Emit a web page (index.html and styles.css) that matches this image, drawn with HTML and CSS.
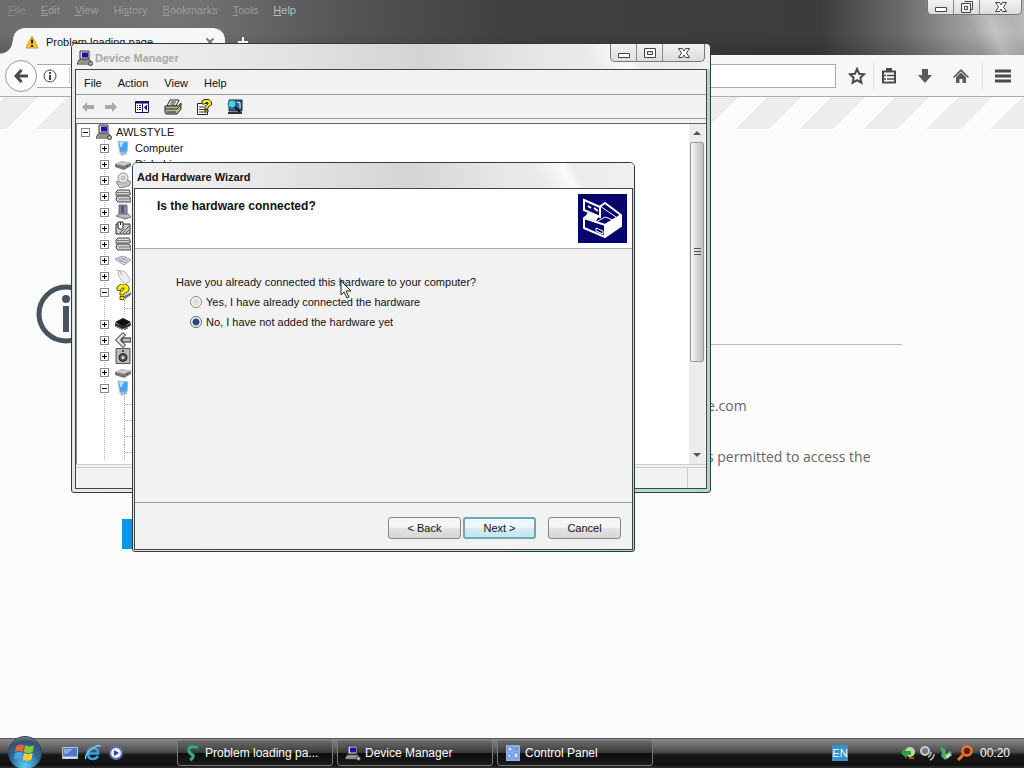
FILE: index.html
```html
<!DOCTYPE html>
<html lang="en">
<head>
  <meta charset="UTF-8">
  <title>Add Hardware Wizard</title>
  <link rel="stylesheet" href="styles.css">
</head>

<body>
  <!-- Shared icons -->
  <svg class="sprite" aria-hidden="true">
    <symbol id="i-pc" viewBox="0 0 16 16">
      <path d="M3 1h9v8H3z" fill="#d8d8d0" stroke="#333"/>
      <path d="M5 2.500h6v5H5z" fill="#1512b8"/>
      <path d="M2 10h11l2 4H0z" fill="#e4e4dc" stroke="#333"/>
      <path d="M2 12h10" stroke="#444"/>
      <circle cx="13.500" cy="13.500" r="2" fill="#bbb" stroke="#333"/>
    </symbol>
    <symbol id="i-monitor" viewBox="0 0 16 16">
      <path d="M3 1l10 1-1 10-7 1z" fill="#42a5ee" stroke="#a9bcd0"/>
      <path d="M4 2h5l-3 6z" fill="#b7e8ff"/>
      <path d="M5 12l7-1v3l-6 2z" fill="#aab4c8"/>
    </symbol>
    <symbol id="i-disk" viewBox="0 0 16 16">
      <path d="M0 8l7-3 9 2v3l-7 4-9-3z" fill="#777"/>
      <path d="M0 8l7-3 9 2-7 3z" fill="#c6c6c2"/>
      <circle cx="12" cy="10" r="1" fill="#555"/>
    </symbol>
    <symbol id="i-cd" viewBox="0 0 16 16">
      <path d="M1 10l10-3 5 3-2 4-9 2z" fill="#c4c4cc" stroke="#888"/>
      <circle cx="8" cy="6" r="5" fill="#e4e4ec" stroke="#999"/>
      <circle cx="8" cy="6" r="1.500" fill="#fff" stroke="#999"/>
    </symbol>
    <symbol id="i-ctrl" viewBox="0 0 16 16">
      <path d="M3 2h11l1 2v3H1V4z" fill="#ddd" stroke="#444"/>
      <path d="M2 8h11l3 2v4H3L1 12z" fill="#ccc" stroke="#444"/>
      <path d="M2 4.500h12M4 11h11" stroke="#777"/>
    </symbol>
    <symbol id="i-display" viewBox="0 0 16 16">
      <path d="M4 1h8v9H4z" fill="#8389a4" stroke="#666"/>
      <path d="M6 2h3v7H6z" fill="#4b5390"/>
      <path d="M1 12l4-2h8l3 3-6 2z" fill="#b8b8c4" stroke="#777"/>
    </symbol>
    <symbol id="i-mouse" viewBox="0 0 16 16">
      <path d="M1 4h14v10H1z" fill="#c9c9c9" stroke="#333"/>
      <path d="M8 13l6-7M11 13l3-3M5 13l4-4" stroke="#555"/>
      <path d="M3 2h5v6q-2 3-5 0z" fill="#fff" stroke="#222"/>
      <path d="M5.500 2v3" stroke="#222"/>
    </symbol>
    <symbol id="i-keyboard" viewBox="0 0 16 16">
      <path d="M0 7l8-3 8 4-7 5z" fill="#dcdce6" stroke="#9a9aaa"/>
      <path d="M3 7l8 4M6 6l7 3M5 10l6-5" stroke="#9a9aaa"/>
    </symbol>
    <symbol id="i-mouse2" viewBox="0 0 16 16">
      <path d="M3 4q3-3 7 0l5 7q0 5-6 4L4 9z" fill="#eceef0" stroke="#b4bac0"/>
      <path d="M1 2l4 1 2 4" fill="none" stroke="#aaa"/>
    </symbol>
    <symbol id="i-unknown" viewBox="0 0 16 16">
      <path d="M9 12l7-4v3l-6 4z" fill="#777"/>
      <path d="M2 6V3l4-3h5l3 3v4L9 10v1H5V8l4-3V4H7L5 7z" fill="#f5ea14" stroke="#5c5600"/>
      <path d="M5 12.500h4v3H5z" fill="#f5ea14" stroke="#5c5600"/>
    </symbol>
    <symbol id="i-chip" viewBox="0 0 16 16">
      <path d="M0 6l8-4 8 4-8 5z" fill="#111"/>
      <path d="M1 8v3M3 9v3M5 10v3M7 11v3M10 11v3M12 10v3M14 8v3" stroke="#111"/>
      <path d="M0 8l8 4 8-4" fill="none" stroke="#222" stroke-width="2"/>
    </symbol>
    <symbol id="i-port" viewBox="0 0 16 16">
      <path d="M8 0.500L.5 8 8 15.500l2.500-2.500-5-5 5-5z" fill="#ddd" stroke="#222"/>
      <path d="M7 6h9v4H7z" fill="#bbb" stroke="#222"/>
    </symbol>
    <symbol id="i-speaker" viewBox="0 0 16 16">
      <path d="M1 .500h14v15H1z" fill="#bbb" stroke="#555"/>
      <circle cx="8" cy="9.500" r="4" fill="#555" stroke="#222"/>
      <circle cx="8" cy="9.500" r="1.500" fill="#ddd"/>
      <circle cx="8" cy="3" r="1" fill="#222"/>
    </symbol>
    <symbol id="i-min" viewBox="0 0 14 12">
      <path d="M1.500 6.500h11v4h-11z" fill="#fff" stroke="#444"/>
    </symbol>
    <symbol id="i-max" viewBox="0 0 14 12">
      <path d="M1.500 1.500h11v9h-11z" fill="#fff" stroke="#444"/>
      <path d="M4.500 4.500h5v3h-5z" fill="#ddd" stroke="#444"/>
    </symbol>
    <symbol id="i-restore" viewBox="0 0 14 12">
      <path d="M4.500.500h8v8h-2M1.500 2.500h9v9h-9z" fill="#eee" stroke="#444"/>
      <path d="M4.500 5.500h3v3h-3z" fill="#fff" stroke="#444"/>
    </symbol>
    <symbol id="i-close" viewBox="0 0 14 12">
      <path d="M1.500 1.500h4L7 4l1.500-2.500h4L9.500 6l3 4.500h-4L7 8l-1.500 2.500h-4l3-4.500z" fill="#fff" stroke="#444"/>
    </symbol>
  </svg>

  <div class="desktop">
    <!-- Browser -->
    <main class="browser">
      <header class="browser-top">
        <nav class="browser-menu">
          <a href="#"><u>F</u>ile</a>
          <a href="#"><u>E</u>dit</a>
          <a href="#"><u>V</u>iew</a>
          <a href="#">Hi<u>s</u>tory</a>
          <a href="#"><u>B</u>ookmarks</a>
          <a href="#"><u>T</u>ools</a>
          <a href="#"><u>H</u>elp</a>
        </nav>
        <div class="tabs">
          <div class="tab">
            <svg width="14" height="14" viewBox="0 0 14 14"><path d="M7 1l6 12H1z" fill="#fdc22a" stroke="#d99a1c" stroke-linejoin="round"/><path d="M7 4.500v4M7 10v2" stroke="#222" stroke-width="2"/></svg>
            <span>Problem loading page</span>
            <button class="tab-close" aria-label="Close tab"><svg width="10" height="10" viewBox="0 0 10 10"><path d="M1.500 1.500l7 7M8.500 1.500l-7 7" stroke="#777" stroke-width="2"/></svg></button>
          </div>
          <button class="tab-new" aria-label="New tab"><svg width="12" height="12" viewBox="0 0 12 12"><path d="M6 1v10M1 6h10" stroke="#fff" stroke-width="2"/></svg></button>
        </div>
        <div class="caption caption-main">
          <button aria-label="Minimize"><svg width="14" height="12"><use href="#i-min"/></svg></button>
          <button aria-label="Restore"><svg width="14" height="12"><use href="#i-restore"/></svg></button>
          <button class="wide" aria-label="Close"><svg width="14" height="12"><use href="#i-close"/></svg></button>
        </div>
      </header>

      <div class="navbar">
        <button class="back" aria-label="Back"><svg width="16" height="16" viewBox="0 0 16 16"><path d="M8.500 2L3 8l5.500 6M3 8h12" fill="none" stroke="#4a4a4a" stroke-width="3"/></svg></button>
        <div class="url">
          <svg width="14" height="14" viewBox="0 0 14 14"><circle cx="7" cy="7" r="6" fill="none" stroke="#444"/><path d="M7 3v2M7 6v5" stroke="#444" stroke-width="2"/></svg>
          <input type="text" aria-label="Address">
        </div>
        <div class="tools">
          <button aria-label="Bookmark"><svg width="18" height="18" viewBox="0 0 18 18"><path d="M9 2l2.100 4.700 5 .500-3.700 3.500 1 5L9 13.200l-4.400 2.500 1-5L1.900 7.200l5-.500z" fill="none" stroke="#4a4a4a" stroke-width="2"/></svg></button>
          <button class="split" aria-label="Library"><svg width="18" height="18" viewBox="0 0 18 18"><path d="M3 4.500h12v11H3z" fill="none" stroke="#4a4a4a" stroke-width="2"/><path d="M6 1h6v4H6z" fill="#4a4a4a"/><path d="M3 8.500h12M3 12h12" stroke="#4a4a4a" stroke-width="1.500"/><path d="M6.500 6v9" stroke="#f6f6f6"/></svg></button>
          <button aria-label="Downloads"><svg width="18" height="18" viewBox="0 0 18 18"><path d="M6 2h6v6h4l-7 8-7-8h4z" fill="#5a5a58"/></svg></button>
          <button aria-label="Home"><svg width="18" height="18" viewBox="0 0 18 18"><path d="M9 2l8 8-1 1-7-6.500L2 11l-1-1z" fill="#5a5a58"/><path d="M4 10l5-4.500 5 4.500v6h-3.500v-4h-3v4H4z" fill="#5a5a58"/></svg></button>
          <button class="split" aria-label="Menu"><svg width="18" height="18" viewBox="0 0 18 18"><path d="M1 4h16M1 9h16M1 14h16" stroke="#4a4a46" stroke-width="3"/></svg></button>
        </div>
      </div>

      <div class="hatch"></div>
      <section class="error-page">
        <div class="error-head">
          <svg width="60" height="60" viewBox="0 0 60 60"><circle cx="30" cy="30" r="27" fill="none" stroke="#49535c" stroke-width="5"/><circle cx="30" cy="15" r="4" fill="#49535c"/><path d="M30 22v26" stroke="#49535c" stroke-width="6"/></svg>
        </div>
        <div class="error-text">
          <p>e.com</p>
          <p>s permitted to access the</p>
        </div>
        <button class="retry" aria-label="Try again"></button>
      </section>
    </main>

    <!-- Device Manager -->
    <section class="window devmgr">
      <div class="titlebar">
        <svg width="16" height="16"><use href="#i-pc"/></svg>
        <h2>Device Manager</h2>
        <div class="caption">
          <button aria-label="Minimize"><svg width="14" height="12"><use href="#i-min"/></svg></button>
          <button aria-label="Maximize"><svg width="14" height="12"><use href="#i-max"/></svg></button>
          <button class="wide" aria-label="Close"><svg width="14" height="12"><use href="#i-close"/></svg></button>
        </div>
      </div>
      <div class="client">
        <nav class="menubar">
          <a href="#">File</a>
          <a href="#">Action</a>
          <a href="#">View</a>
          <a href="#">Help</a>
        </nav>
        <div class="toolbar">
          <button aria-label="Back"><svg width="14" height="12" viewBox="0 0 14 12"><path d="M1 6l5-5v3h7v4H6v3z" fill="#a8a8a8"/></svg></button>
          <button aria-label="Forward"><svg width="14" height="12" viewBox="0 0 14 12"><path d="M13 6L8 1v3H1v4h7v3z" fill="#a8a8a8"/></svg></button>
          <div class="toolset">
            <button aria-label="Show tree"><svg width="16" height="16" viewBox="0 0 16 16"><path d="M1.500 2.500h13v11h-13z" fill="#fff" stroke="#10106c"/><path d="M1 3.500h14" stroke="#10106c" stroke-width="2"/><path d="M8.500 3v10" stroke="#10106c"/><path d="M3 6.500h1M5 6.500h2M3 8.500h1M5 8.500h2M3 10.500h1M5 10.500h2" stroke="#10106c"/><path d="M13 5.500v6L10 8.500z" fill="#10106c"/></svg></button>
            <button aria-label="Print"><svg width="18" height="16" viewBox="0 0 18 16"><path d="M6 1h9l-3 6H3z" fill="#fff" stroke="#222"/><path d="M7 3h5M6 5h5" stroke="#222"/><path d="M1 7h13l3-3v6l-4 5H2l-1-2z" fill="#b9b994" stroke="#222"/><path d="M1 10h12l4-4M3 13h9" fill="none" stroke="#222"/></svg></button>
            <button aria-label="Help topics"><svg width="16" height="16" viewBox="0 0 16 16"><path d="M1.500 4.500h10v11h-10z" fill="#fff" stroke="#222"/><path d="M3 8h5M3 10.500h7M3 13h7" stroke="#333"/><path d="M6 5V2l2-1.500h5L15.500 3v3L12 8v2H9V7l3-2V3.500h-2L9 5z" fill="#f5ea14" stroke="#333"/><path d="M9 11h3v2H9z" fill="#f5ea14" stroke="#333"/></svg></button>
            <button aria-label="Scan for hardware changes"><svg width="16" height="16" viewBox="0 0 16 16"><path d="M2 1h13v11H2z" fill="#2565a8" stroke="#222"/><path d="M1 14h14" stroke="#333" stroke-width="2"/><circle cx="5" cy="5" r="4" fill="#52cde0" stroke="#1b6d80"/><path d="M8 8l5 5" stroke="#111" stroke-width="2"/><path d="M10 3l3 1v5" fill="none" stroke="#fff"/></svg></button>
          </div>
        </div>
        <div class="pane">
          <div class="tree">
            <div class="row root"><button class="toggle open" aria-label="Collapse"></button><svg width="16" height="16"><use href="#i-pc"/></svg><span>AWLSTYLE</span></div>
            <ul class="branch">
              <li class="row"><button class="toggle" aria-label="Expand"></button><svg width="16" height="16"><use href="#i-monitor"/></svg><span>Computer</span></li>
              <li class="row"><button class="toggle" aria-label="Expand"></button><svg width="16" height="16"><use href="#i-disk"/></svg><span>Disk drives</span></li>
              <li class="row"><button class="toggle" aria-label="Expand"></button><svg width="16" height="16"><use href="#i-cd"/></svg></li>
              <li class="row"><button class="toggle" aria-label="Expand"></button><svg width="16" height="16"><use href="#i-ctrl"/></svg></li>
              <li class="row"><button class="toggle" aria-label="Expand"></button><svg width="16" height="16"><use href="#i-display"/></svg></li>
              <li class="row"><button class="toggle" aria-label="Expand"></button><svg width="16" height="16"><use href="#i-mouse"/></svg></li>
              <li class="row"><button class="toggle" aria-label="Expand"></button><svg width="16" height="16"><use href="#i-ctrl"/></svg></li>
              <li class="row"><button class="toggle" aria-label="Expand"></button><svg width="16" height="16"><use href="#i-keyboard"/></svg></li>
              <li class="row"><button class="toggle" aria-label="Expand"></button><svg width="16" height="16"><use href="#i-mouse2"/></svg></li>
              <li class="row"><button class="toggle open" aria-label="Collapse"></button><svg width="16" height="16"><use href="#i-unknown"/></svg></li>
              <li class="leaf"></li>
              <li class="row"><button class="toggle" aria-label="Expand"></button><svg width="16" height="16"><use href="#i-chip"/></svg></li>
              <li class="row"><button class="toggle" aria-label="Expand"></button><svg width="16" height="16"><use href="#i-port"/></svg></li>
              <li class="row"><button class="toggle" aria-label="Expand"></button><svg width="16" height="16"><use href="#i-speaker"/></svg></li>
              <li class="row"><button class="toggle" aria-label="Expand"></button><svg width="16" height="16"><use href="#i-disk"/></svg></li>
              <li class="row"><button class="toggle open" aria-label="Collapse"></button><svg width="16" height="16"><use href="#i-monitor"/></svg></li>
              <li class="leaf"></li>
              <li class="leaf"></li>
              <li class="leaf"></li>
              <li class="leaf"></li>
            </ul>
          </div>
          <div class="scrollbar">
            <button class="arrow" aria-label="Scroll up"><svg width="8" height="4" viewBox="0 0 8 4"><path d="M4 0l4 4H0z" fill="#555"/></svg></button>
            <div class="thumb"><i></i></div>
            <button class="arrow" aria-label="Scroll down"><svg width="8" height="4" viewBox="0 0 8 4"><path d="M4 4l4-4H0z" fill="#555"/></svg></button>
          </div>
        </div>
        <div class="statusbar"><span></span><span></span></div>
      </div>
    </section>

    <!-- Add Hardware Wizard -->
    <form class="window wizard">
      <div class="titlebar"><h2>Add Hardware Wizard</h2></div>
      <div class="client">
        <div class="wizard-head">
          <h3>Is the hardware connected?</h3>
          <svg width="49" height="49" viewBox="0 0 49 49">
            <path d="M0 0h49v49H0z" fill="#04046c"/>
            <path d="M6 24l21-15 16 12v11L27 43 6 34z" fill="#04046c" stroke="#fff" stroke-width="2" stroke-linejoin="round"/>
            <path d="M27 30l16-9v11L27 43z" fill="#fff"/>
            <path d="M6 24l21 7 16-10M27 31v12" fill="none" stroke="#fff" stroke-width="2"/>
            <path d="M22 12l16 11M18 28l9-5 8 3" fill="none" stroke="#fff"/>
            <path d="M6 6l16 7v10L6 16z" fill="#04046c" stroke="#fff" stroke-width="2"/>
            <path d="M10 12l3 2M16 14l4 3" stroke="#fff" stroke-width="2"/>
            <path d="M9 19l12 3-3 5-10-3z" fill="#fff"/>
            <path d="M18 34l7 3v3l-7-3z" fill="#04046c" stroke="#fff"/>
          </svg>
        </div>
        <fieldset class="wizard-body">
          <legend>Have you already connected this hardware to your computer?</legend>
          <label><input type="radio" name="connected">Yes, I have already connected the hardware</label>
          <label><input type="radio" name="connected" checked>No, I have not added the hardware yet</label>
        </fieldset>
        <div class="wizard-foot">
          <button type="button">&lt; Back</button>
          <button type="button" class="default">Next &gt;</button>
          <button type="button" class="cancel">Cancel</button>
        </div>
      </div>
    </form>

    <!-- Taskbar -->
    <footer class="taskbar">
      <button class="start" aria-label="Start">
        <svg width="22" height="22" viewBox="0 0 20 20">
          <path d="M2 4q4-3 7-1L8 9Q5 7 1 9z" fill="#f0642c"/>
          <path d="M10 3q4 2 8 0l-1 6q-4 2-8 0z" fill="#8cc63c"/>
          <path d="M1 10q4-2 7 0l-1 6q-3-2-7 0z" fill="#45a5e8"/>
          <path d="M9 10q4 2 8 0l-1 6q-4 2-8 0z" fill="#fccb2c"/>
        </svg>
      </button>
      <div class="quick">
        <button aria-label="Show desktop"><svg width="16" height="16" viewBox="0 0 16 16"><path d="M.500 2.500h15v11H.500z" fill="#4a78c4" stroke="#b8c8dc"/><path d="M1 12.500h14" stroke="#d8e0ea" stroke-width="2"/><path d="M2 4h9l-6 5H2z" fill="#86abe4"/></svg></button>
        <button aria-label="Internet Explorer"><svg width="16" height="16" viewBox="0 0 16 16"><path d="M13 11q-2 3-5 3-5 0-5-5.500T8 3q5 0 5 5.500H4" fill="none" stroke="#38a0e4" stroke-width="2.500"/><path d="M1 14Q-1 10 7 4t8-2" fill="none" stroke="#80ccf4" stroke-width="1.500"/></svg></button>
        <button aria-label="Media player"><svg width="16" height="16" viewBox="0 0 16 16"><circle cx="8" cy="8" r="7" fill="#5c6cb0"/><circle cx="8" cy="8" r="5" fill="#f4f4fc"/><path d="M6 5l5 3-5 3z" fill="#2848a8"/></svg></button>
      </div>
      <div class="tasks">
        <button><svg width="16" height="16" viewBox="0 0 16 16"><path d="M13 3Q5 0 4 4t4 6q1 3-3 5" fill="none" stroke="#38a884" stroke-width="3"/><path d="M9 3l6 1-2 2z" fill="#246c58"/></svg><span>Problem loading pa...</span></button>
        <button><svg width="16" height="16"><use href="#i-pc"/></svg><span>Device Manager</span></button>
        <button><svg width="16" height="16" viewBox="0 0 16 16"><path d="M1 0h14v16H1z" fill="#88b0ec"/><path d="M3 2h4v4H3zM9 3h4M9 5h4M3 9h3v4H3zM9 8h4v5H9z" fill="#dceaff" stroke="#5c84d0"/></svg><span>Control Panel</span></button>
      </div>
      <div class="tray">
        <button class="lang">EN</button>
        <svg width="16" height="16" viewBox="0 0 16 16"><circle cx="10" cy="7" r="5" fill="#bcd8a4"/><path d="M1 8l4-5 1 3h5v4H6l1 4z" fill="#2fa03c"/><path d="M9 13h5" stroke="#c0402c" stroke-width="2"/></svg>
        <svg width="16" height="16" viewBox="0 0 16 16"><circle cx="6" cy="6" r="4" fill="#777" stroke="#ccc" stroke-width="2"/><path d="M9 12q3-1 3-5M11 15q4-2 4-6" fill="none" stroke="#bbb" stroke-width="1.500"/></svg>
        <svg width="16" height="16" viewBox="0 0 16 16"><path d="M2 2l5 2 1 5 4-3 2 2-7 7-4-4 1-3z" fill="#48b05c"/><path d="M7 11l4-3 3 2-5 4z" fill="#ccc"/></svg>
        <svg width="16" height="16" viewBox="0 0 16 16"><circle cx="10" cy="6" r="4.500" fill="#5c2408" stroke="#ee7a24" stroke-width="2.500"/><path d="M6 10l-5 5" stroke="#ee7a24" stroke-width="3"/></svg>
        <time>00:20</time>
      </div>
    </footer>

    <svg class="cursor" width="13" height="20" viewBox="0 0 13 20"><path d="M1 1v14l3-3 3 6 2-1-3-6h5z" fill="#fff" stroke="#222"/></svg>
  </div>
</body>
</html>
```

FILE: styles.css
```css
/* ===============================
   BASE
=============================== */
* {
  box-sizing: border-box;
}
html, body {
  margin: 0;
  height: 100%;
}
body {
  font-family: "Liberation Sans", Arial, sans-serif;
  font-size: 11px;
  color: #111;
  overflow: hidden;
}
button {
  font: inherit;
  color: inherit;
  margin: 0;
  padding: 0;
  border: 0;
  background: none;
  display: flex;
  align-items: center;
  justify-content: center;
}
a {
  color: inherit;
  text-decoration: none;
}
h2, h3, p, ul {
  margin: 0;
  padding: 0;
}
svg {
  flex: none;
  display: block;
}
.sprite {
  position: absolute;
  width: 0;
  height: 0;
}
.desktop {
  position: relative;
  height: 100%;
  display: flex;
  flex-direction: column;
}

/* ===============================
   BROWSER
=============================== */
.browser {
  flex: 1;
  min-height: 0;
  display: flex;
  flex-direction: column;
  background: #fbfbfb;
}
.browser-top {
  position: relative;
  height: 55px;
  display: flex;
  flex-direction: column;
  justify-content: space-between;
  background:
    linear-gradient(68deg, transparent 94%, rgba(255, 255, 255, 0.25) 96%, transparent 98%),
    linear-gradient(to bottom, transparent 60%, rgba(0, 0, 0, 0.15)),
    linear-gradient(to right, #6c6c6c, #747474 18%, #545454 34%, #404040 50%, #3c3c3c 80%, #6a6a6a 88%, #a4a4a4 95%, #b8b8b8);
}
.browser-menu {
  display: flex;
  gap: 15px;
  padding: 4px 8px;
  color: #9c9c9c;
}
.browser-menu a:first-child {
  color: #8a8a8a;
}
.browser-menu a:last-child {
  color: #bcbcbc;
}
.tabs {
  display: flex;
  align-items: center;
  gap: 12px;
  padding-left: 13px;
}
.tab {
  position: relative;
  width: 212px;
  height: 27px;
  display: flex;
  align-items: center;
  gap: 7px;
  padding: 0 10px 0 12px;
  background: #f7f7f7;
  border-radius: 12px 12px 0 0;
}
/* Curved foot of the tab */
.tab::before {
  content: '';
  position: absolute;
  right: 100%;
  bottom: 0;
  width: 13px;
  height: 14px;
  background: radial-gradient(circle at 0 0, transparent 12px, #f7f7f7 13px);
}
.tab-close {
  margin-left: auto;
}
.caption {
  display: flex;
  align-self: flex-start;
  border: 1px solid #777;
  border-top: 0;
  border-radius: 0 0 5px 5px;
  background: linear-gradient(#f2f2f2, #dcdcdc);
}
.caption button {
  width: 26px;
  height: 17px;
  border-right: 1px solid #888;
}
.caption .wide {
  width: 41px;
  border-right: 0;
}
.caption-main {
  position: absolute;
  top: 0;
  right: 2px;
}
.caption-main button {
  height: 14px;
}
.navbar {
  height: 42px;
  display: flex;
  align-items: center;
  padding: 0 12px 0 5px;
  background: #f7f7f7;
  border-bottom: 1px solid #aaa;
}
.back {
  width: 32px;
  height: 32px;
  border: 1px solid #999;
  border-radius: 50%;
  background: #fcfcfc;
}
.url {
  flex: 1;
  height: 24px;
  display: flex;
  align-items: center;
  padding-left: 6px;
  background: #fff;
  border: 1px solid #aaa;
  border-left: 0;
}
.url input {
  flex: 1;
  margin-left: 12px;
  border: 0;
  border-left: 1px solid #ccc;
  background: none;
}
.tools {
  display: flex;
  gap: 18px;
  padding-left: 12px;
}
.tools .split {
  position: relative;
}
.tools .split::before {
  content: '';
  position: absolute;
  left: -7px;
  top: -4px;
  bottom: -4px;
  width: 1px;
  background: #ddd;
}
.tools button:last-child {
  margin-left: 6px;
}
.tools button:last-child::before {
  left: -12px;
}
.tools button:first-child {
  margin-right: -4px;
}
.hatch {
  height: 32px;
  background: repeating-linear-gradient(135deg, #fcfcfc 0 3px, #ededed 3px 27px, #fcfcfc 27px 45px);
}
.error-page {
  padding: 155px 122px 0 36px;
}
.error-head {
  height: 61px;
  margin-bottom: 52px;
}
.error-head::after {
  content: '';
  display: block;
  margin-left: 86px;
  border-bottom: 1px solid #bbb;
}
.error-text {
  padding-left: 671px;
  font-family: "Open Sans", sans-serif;
  font-size: 14px;
  line-height: 18px;
  color: #666;
  white-space: nowrap;
}
.error-text p {
  margin-bottom: 33px;
}
.retry {
  width: 120px;
  height: 30px;
  margin: 53px 0 0 86px;
  background: #0a96e6;
}

/* ===============================
   WINDOWS
=============================== */
.window {
  position: absolute;
  display: flex;
  flex-direction: column;
  padding: 0 3px 3px;
  border: 1px solid #2c3c3c;
  border-radius: 5px 5px 3px 3px;
  background: linear-gradient(to right, #e4e8e8, #e0e0e0 60%, #a4dccc);
}
.titlebar {
  display: flex;
  align-items: center;
  margin: 0 -3px;
  padding-top: 2px;
  border-radius: 4px 4px 0 0;
  background:
    linear-gradient(245deg, transparent 12%, rgba(255, 255, 255, 0.7) 14%, transparent 20%),
    linear-gradient(to right, #f2f2f2, #e8e8e8 25%, #d4d4d4 55%, #e8e8e8 75%, #f0f0f0);
}
.titlebar h2 {
  font-size: 11px;
  font-weight: bold;
}
.client {
  flex: 1;
  min-height: 0;
  display: flex;
  flex-direction: column;
  border: 1px solid #444;
  background: #f2f2f2;
}

/* ===============================
   DEVICE MANAGER
=============================== */
.devmgr {
  left: 71px;
  top: 43px;
  width: 640px;
  height: 450px;
}
.devmgr .titlebar {
  height: 25px;
  gap: 2px;
  padding-left: 5px;
  padding-right: 5px;
}
.devmgr h2 {
  color: #a8a8a8;
}
.devmgr .caption {
  margin-top: -2px;
  margin-left: auto;
}
.menubar {
  display: flex;
  align-items: center;
  gap: 16px;
  height: 25px;
  padding: 2px 8px 0;
  border-bottom: 1px solid #999;
}
.toolbar {
  display: flex;
  align-items: center;
  gap: 9px;
  height: 24px;
  padding: 0 5px;
  border-bottom: 1px solid #999;
}
.toolset {
  display: flex;
  gap: 9px;
  margin-left: 4px;
}
.toolset button {
  width: 22px;
}
.pane {
  flex: 1;
  min-height: 0;
  display: flex;
  margin-top: 4px;
  padding-right: 1px;
  border-top: 1px solid #666;
  border-left: 1px solid #888;
  background: #fff;
}
.tree {
  flex: 1;
  overflow: hidden;
}
.row {
  display: flex;
  align-items: center;
  height: 16px;
}
.row span {
  margin-left: 4px;
}
.row svg {
  margin-left: 6px;
}
.root {
  padding-left: 4px;
}
.branch {
  list-style: none;
  margin-left: 27px;
  background: repeating-linear-gradient(#b4b4b4 0 1px, transparent 1px 2px) 0 0 / 1px 100% no-repeat;
}
.branch .toggle {
  margin-left: -4px;
}
.toggle {
  width: 9px;
  height: 9px;
  border: 1px solid #888;
  background:
    linear-gradient(#000, #000) center / 5px 1px no-repeat,
    linear-gradient(#000, #000) center / 1px 5px no-repeat,
    #fff;
}
.toggle.open {
  background: linear-gradient(#000, #000) center / 5px 1px no-repeat, #fff;
}
.leaf {
  height: 16px;
  margin-left: 20px;
  border-left: 1px dotted #aaa;
  background: repeating-linear-gradient(to right, #aaa 0 1px, transparent 1px 2px) 0 8px / 12px 1px no-repeat;
}
.scrollbar {
  width: 16px;
  display: flex;
  flex-direction: column;
  background: #ececec;
}
.arrow {
  height: 18px;
}
.thumb {
  flex: 0 0 220px;
  margin: 0 1px auto;
  display: flex;
  align-items: center;
  justify-content: center;
  border: 1px solid #999;
  border-radius: 2px;
  background: linear-gradient(to right, #f8f8f8, #d4d4d4 60%, #c0c0c0);
}
.thumb i {
  width: 7px;
  height: 8px;
  background: repeating-linear-gradient(#555 0 1px, transparent 1px 3px);
}
.statusbar {
  display: flex;
  height: 24px;
  padding-top: 2px;
  border-top: 1px solid #ccc;
}
.statusbar span {
  width: 18px;
  border-top: 1px solid #ccc;
}
.statusbar span:first-child {
  flex: 1;
  border-right: 1px solid #ccc;
}

/* ===============================
   WIZARD
=============================== */
.wizard {
  left: 132px;
  top: 162px;
  width: 503px;
  height: 390px;
  padding: 0 1px 1px;
}
.wizard .titlebar {
  height: 25px;
  margin: 0 -1px;
  padding-left: 4px;
}
.wizard-head {
  display: flex;
  justify-content: space-between;
  align-items: flex-start;
  height: 60px;
  padding: 5px 5px 0 22px;
  background: #fff;
  border-bottom: 1px solid #aaa;
}
.wizard-head h3 {
  font-size: 12px;
  line-height: 24px;
}
.wizard-body {
  flex: 1;
  display: flex;
  flex-direction: column;
  gap: 4px;
  margin: 0;
  padding: 26px 41px;
  border: 0;
}
.wizard-body legend {
  float: left;
  padding: 0;
  line-height: 15px;
}
.wizard-body label {
  display: flex;
  align-items: center;
  gap: 4px;
  height: 16px;
  padding-left: 14px;
}
.wizard-body input {
  appearance: none;
  width: 12px;
  height: 12px;
  margin: 0;
  border: 1px solid #888;
  border-radius: 50%;
  background: radial-gradient(#ddd 40%, #fff 60%);
}
.wizard-body input:checked {
  border-color: #4c6880;
  background: radial-gradient(#1c4c80 45%, #fff 55%);
}
.wizard-foot {
  display: flex;
  justify-content: flex-end;
  gap: 2px;
  padding: 14px 11px 10px;
  border-top: 1px solid #999;
}
.wizard-foot button {
  width: 73px;
  height: 22px;
  border: 1px solid #888;
  border-radius: 3px;
  background: linear-gradient(#f6f6f6 45%, #e0e0e0 55%, #d8d8d8);
}
.wizard-foot .default {
  border: 2px solid #6aa8b8;
  background: linear-gradient(#eef8fa 45%, #d4eaf0 55%, #c8e4ec);
}
.wizard-foot .cancel {
  margin-left: 10px;
}
.cursor {
  position: absolute;
  left: 340px;
  top: 280px;
}

/* ===============================
   TASKBAR
=============================== */
.taskbar {
  height: 30px;
  display: flex;
  align-items: center;
  padding: 0 14px 2px 8px;
  color: #fff;
  font-size: 12px;
  border-top: 1px solid #555;
  background: linear-gradient(#8a8a8a, #4a4a4a 45%, #161616 55%, #111 90%, #333);
}
.start {
  width: 34px;
  height: 34px;
  margin: -2px 0;
  border-radius: 50%;
  border: 1px solid #345;
  background: radial-gradient(circle at 50% 90%, #5cd0f0, #2c6c9c 45%, #38506c 75%, #a0b0bc);
}
.quick {
  display: flex;
  gap: 7px;
  margin-left: 20px;
}
.tasks {
  flex: 1;
  display: flex;
  gap: 4px;
  margin-left: 53px;
}
.tasks button {
  flex: 0 1 156px;
  height: 26px;
  justify-content: flex-start;
  gap: 4px;
  padding: 0 7px;
  border: 1px solid #777;
  border-radius: 3px;
  background: linear-gradient(#6a6a6a, #3a3a3a 48%, #0c0c0c 52%, #1c1c1c);
}
.tray {
  display: flex;
  align-items: center;
  gap: 3px;
}
.lang {
  width: 16px;
  height: 16px;
  margin-right: 49px;
  font-size: 11px;
  background: #3a90cc;
}
.tray time {
  margin-left: 4px;
}
```
